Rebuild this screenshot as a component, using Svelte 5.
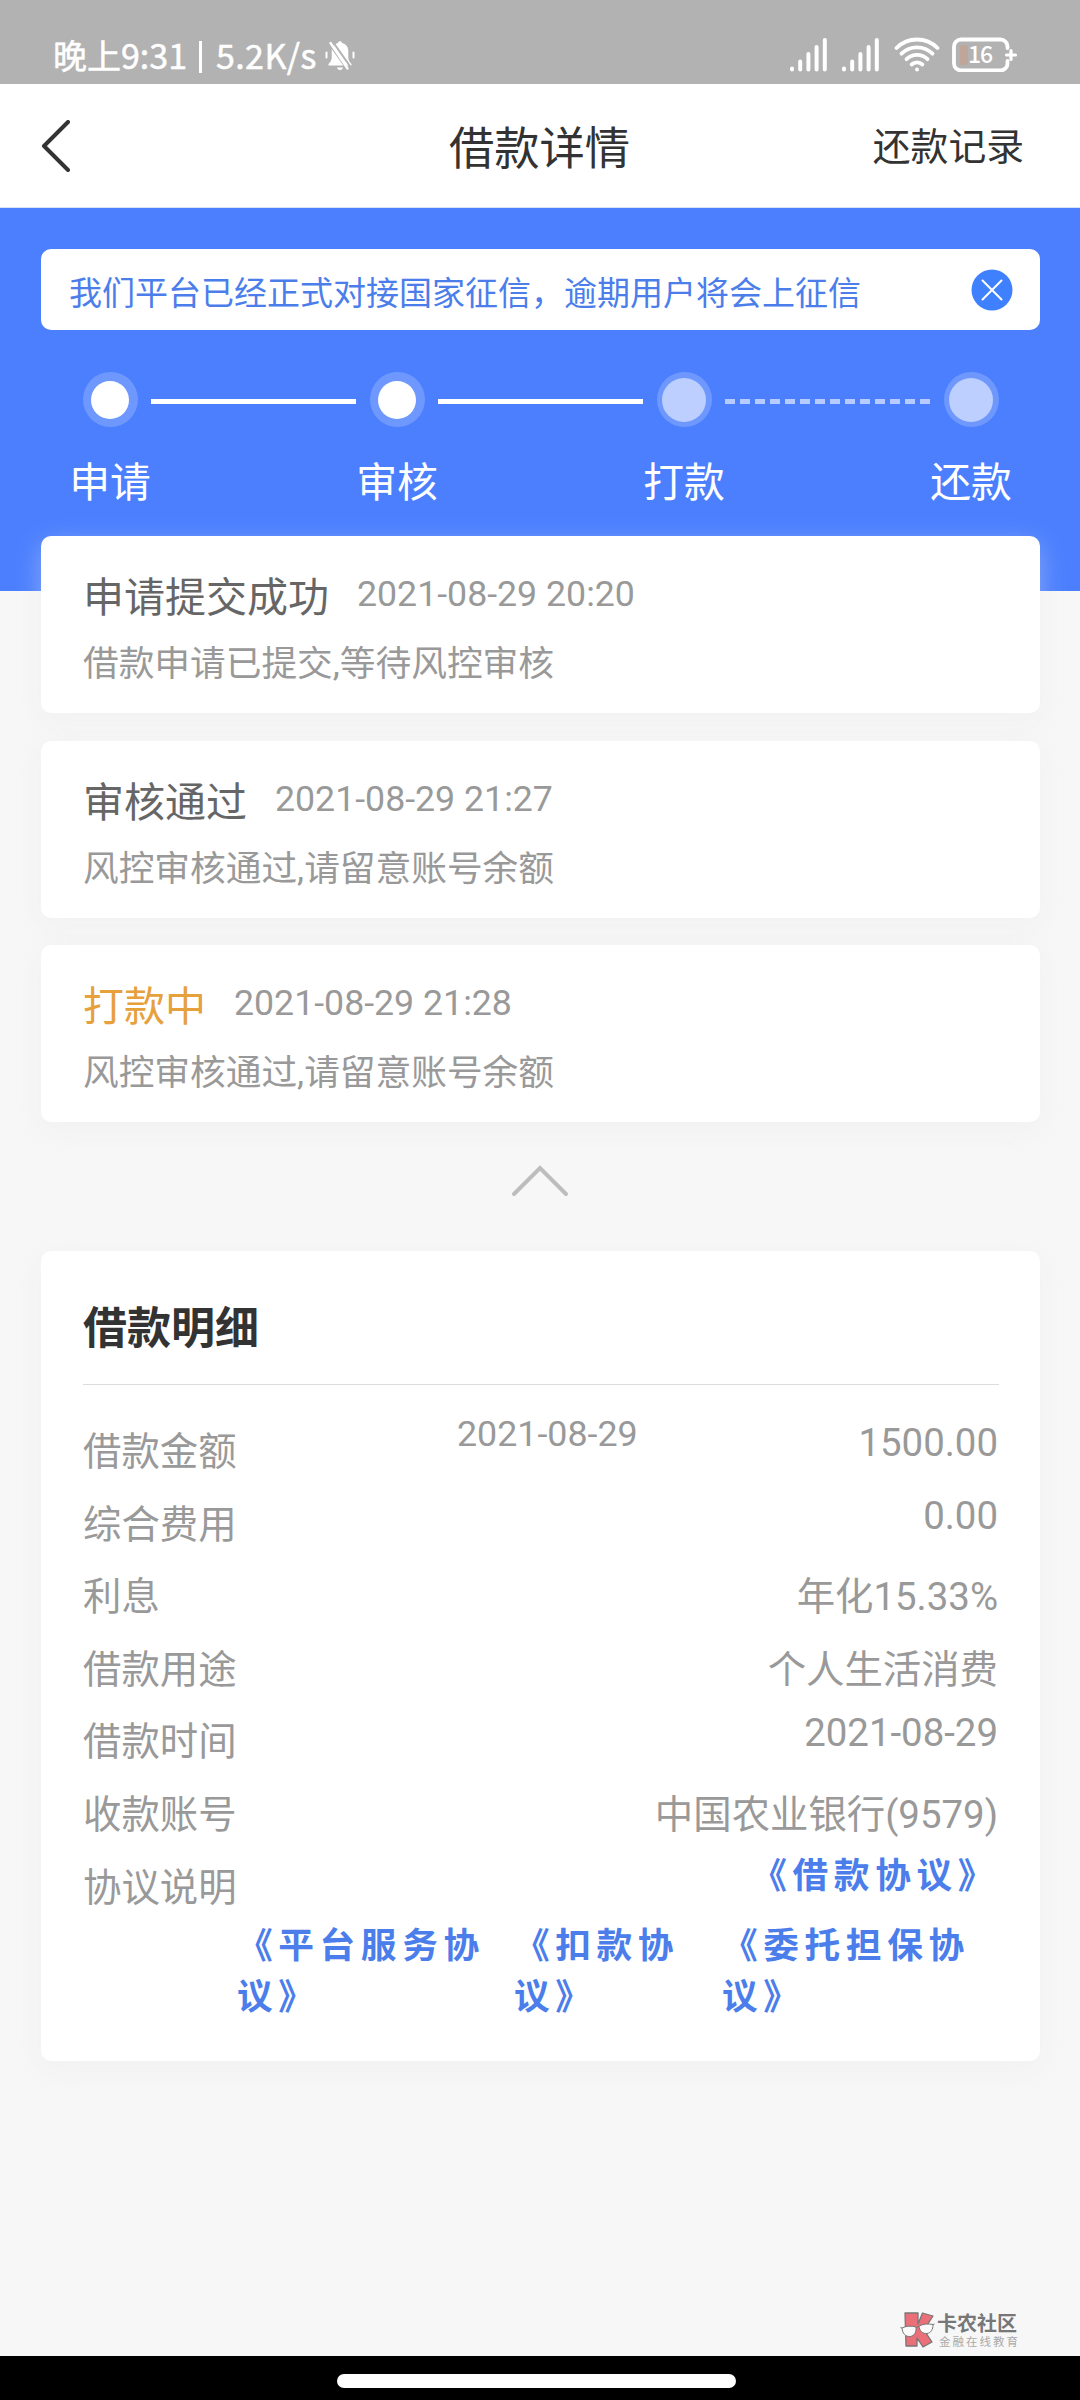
<script lang="ts">
  type Step = { label: string; done: boolean };
  type Progress = { title: string; time: string; text: string; active?: boolean };
  type Row = { label: string; value: string; numeric?: boolean; middle?: string };

  const steps: Step[] = [
    { label: '申请', done: true },
    { label: '审核', done: true },
    { label: '打款', done: false },
    { label: '还款', done: false }
  ];

  const progress: Progress[] = [
    { title: '申请提交成功', time: '2021-08-29 20:20', text: '借款申请已提交,等待风控审核' },
    { title: '审核通过', time: '2021-08-29 21:27', text: '风控审核通过,请留意账号余额' },
    { title: '打款中', time: '2021-08-29 21:28', text: '风控审核通过,请留意账号余额', active: true }
  ];

  const rows: Row[] = [
    { label: '借款金额', value: '1500.00', numeric: true, middle: '2021-08-29' },
    { label: '综合费用', value: '0.00', numeric: true },
    { label: '利息', value: '年化15.33%' },
    { label: '借款用途', value: '个人生活消费' },
    { label: '借款时间', value: '2021-08-29', numeric: true },
    { label: '收款账号', value: '中国农业银行(9579)' }
  ];

  const agreements = ['《平台服务协议》', '《扣款协议》', '《委托担保协议》'];

  let showNotice = $state(true);
</script>

<div class="page">
  <div class="status">
    <div class="status-left">
      <span class="clock">晚上9:31</span>
      <span class="divider"></span>
      <span class="speed">5.2K/s</span>
      <svg class="bell" width="30" height="31" viewBox="0 0 30 31">
        <path d="M15 1.2c1 0 1.800.7 2 1.700 4 .9 6.300 4 6.300 8.200v6.300c0 2.400 1.200 4.500 3.200 6.700v1.400H3.500v-1.400c2-2.200 3.200-4.300 3.200-6.700v-6.300c0-4.200 2.300-7.300 6.300-8.200.2-1 1-1.700 2-1.700z" fill="#fff" />
        <path d="M12 27.500h6c-.4 1.700-1.500 2.500-3 2.500s-2.600-.8-3-2.500z" fill="#fff" />
        <path d="M1.500 12.500v5M28.500 12.500v5" stroke="#fff" stroke-width="2" stroke-linecap="round" />
        <path d="M3 2l21 30M8 2l19 27" stroke="#b2b2b2" stroke-width="2" />
        <path d="M5.500 3l17 25.500" stroke="#fff" stroke-width="2.400" stroke-linecap="round" />
      </svg>
    </div>
    <div class="status-right">
      {#each [0, 1] as sim (sim)}
        <svg class="signal" width="37" height="36" viewBox="0 0 37 36">
          <path d="M2 32.500v1M10.200 25.500v8M18.400 18v15.500M26.600 11v22.500M34.800 4v29.500" stroke="#fff" stroke-width="4" stroke-linecap="round" />
        </svg>
      {/each}
      <svg class="wifi" width="46" height="36" viewBox="0 0 46 36">
        <g fill="none" stroke="#fff" stroke-width="3.800" stroke-linecap="round">
          <path d="M2.500 12a29 29 0 0 1 41 0" />
          <path d="M7.500 17.700a22 22 0 0 1 31 0" />
          <path d="M12.500 23.200a15 15 0 0 1 21 0" />
          <path d="M17.600 28.500a8 8 0 0 1 10.800 0" />
        </g>
        <circle cx="23" cy="33.500" r="2" fill="#fff" />
      </svg>
      <svg class="battery" width="66" height="36" viewBox="0 0 66 36">
        <rect x="8" y="9" width="8" height="20" rx="2" fill="#bfa699" />
        <path d="M55.500 12v-1.500a7 7 0 0 0-7-7H9a7 7 0 0 0-7 7v17a7 7 0 0 0 7 7h39.500a7 7 0 0 0 7-7V25" fill="none" stroke="#fff" stroke-width="3.800" stroke-linecap="round" />
        <path d="M54.500 19h9M59 14.500v9" stroke="#fff" stroke-width="3.200" stroke-linecap="round" />
        <text x="28" y="27" text-anchor="middle">16</text>
      </svg>
    </div>
  </div>

  <nav>
    <button class="back" aria-label="返回">
      <svg width="30" height="52" viewBox="0 0 30 52">
        <path d="M27 2L3 26l24 24" fill="none" stroke="#333" stroke-width="4" stroke-linecap="round" stroke-linejoin="round" />
      </svg>
    </button>
    <h1>借款详情</h1>
    <span class="records">还款记录</span>
  </nav>

  <div class="banner">
    {#if showNotice}
      <div class="notice">
        <span>我们平台已经正式对接国家征信，逾期用户将会上征信</span>
        <button aria-label="关闭" onclick={() => (showNotice = false)}>
          <svg width="42" height="42" viewBox="0 0 42 42">
            <circle cx="21" cy="21" r="20.500" fill="#3f80ff" />
            <path d="M11.500 11.500l19 19M30.500 11.500l-19 19" stroke="#fff" stroke-width="2" stroke-linecap="round" />
          </svg>
        </button>
      </div>
    {/if}

    <div class="steps">
      {#each steps as step, i}
        {#if i > 0}
          <div class="line" class:dashed={!steps[i - 1].done}></div>
        {/if}
        <div class="step">
          <div class="halo"><div class="dot" class:done={step.done}></div></div>
          <span>{step.label}</span>
        </div>
      {/each}
    </div>
  </div>

  <div class="progress">
    {#each progress as item}
      <div class="card item">
        <div class="item-head">
          <span class="item-title" class:active={item.active}>{item.title}</span>
          <span class="item-time">{item.time}</span>
        </div>
        <p>{item.text}</p>
      </div>
    {/each}
  </div>

  <div class="collapse">
    <svg width="58" height="34" viewBox="0 0 58 34">
      <path d="M3 30L29 4l26 26" fill="none" stroke="#bdbdbd" stroke-width="4" stroke-linecap="round" />
    </svg>
  </div>

  <div class="card detail">
    <h2>借款明细</h2>
    <div class="rows">
      {#each rows as row}
        <div class="row">
          <span class="label">{row.label}</span>
          {#if row.middle}
            <span class="middle">{row.middle}</span>
          {/if}
          <span class="value" class:numeric={row.numeric}>{row.value}</span>
        </div>
      {/each}
      <div class="row">
        <span class="label">协议说明</span>
        <span class="value link first">《借款协议》</span>
      </div>
    </div>
    <div class="agreements">
      {#each agreements as name}
        <span class="link">{name}</span>
      {/each}
    </div>
  </div>

  <footer>
    <svg width="35" height="38" viewBox="0 0 35 38">
      <path d="M5 2h13v11l4.500-11 10.500 3-9 14 8 12-9 5-6-9v8H6z" fill="#ea6f78" stroke="#777" stroke-width="1.300" stroke-linejoin="round" />
      <g fill="#fafafa" stroke="#777" stroke-width="1">
        <path d="M2 17c4-2 9-2.500 14-1 .5 5-1.500 9-6 9.500-4.500.3-7.500-3-8-8.500z" />
        <path d="M19 15c4-2 9-2.500 14-1.500 0 5-2 8.500-6 9-4.500.3-7.500-2.500-8-7.500z" />
        <path d="M16 16.500l3-1M0.500 16.500L2 17M33 13.500l1.500-.5" />
      </g>
    </svg>
    <div class="brand">
      <strong>卡农社区</strong>
      <small>金融在线教育</small>
    </div>
  </footer>

  <div class="gesture"><div class="pill"></div></div>
</div>

<style>
  :global(body) {
    margin: 0;
    background: #f7f7f7;
  }

  .page {
    display: flex;
    flex-direction: column;
    width: 1080px;
    height: 2400px;
    overflow: hidden;
    background: #f7f7f7;
    font-family: Roboto, 'Noto Sans CJK SC', sans-serif;
    color: #333;
  }

  h1,
  h2,
  p {
    margin: 0;
    font-weight: 400;
  }

  button {
    display: flex;
    padding: 0;
    border: 0;
    background: none;
  }

  svg {
    display: block;
    flex: none;
  }

  .status {
    display: flex;
    justify-content: space-between;
    box-sizing: border-box;
    height: 84px;
    padding: 36px 62px 0 53px;
    background: #b2b2b2;
    color: #fff;
  }

  .status-left,
  .status-right {
    display: flex;
  }

  .status-left {
    font-family: 'Noto Sans CJK SC', sans-serif;
    font-size: 34px;
    line-height: 38px;
    white-space: nowrap;
    -webkit-text-stroke: 0.5px #fff;
  }

  .clock {
    width: 133px;
  }

  .divider {
    width: 3px;
    height: 32px;
    margin: 5px 14px 0 13px;
    background: #fff;
  }

  .speed {
    width: 101px;
    letter-spacing: 0.4px;
  }

  .bell {
    margin: 4px 0 0 8px;
  }

  .signal {
    margin-right: 15px;
  }

  .wifi {
    margin-right: 12px;
  }

  .battery text {
    font-family: 'Noto Sans CJK SC', sans-serif;
    font-size: 23px;
    font-weight: 500;
    letter-spacing: -1px;
    fill: #fff;
  }

  nav {
    display: grid;
    grid-template-columns: 1fr auto 1fr;
    align-items: center;
    box-sizing: border-box;
    height: 124px;
    padding: 4px 56px 0 41px;
    border-bottom: 1px solid #d5e0fa;
    background: #fff;
  }

  .back {
    margin-top: -4px;
  }

  h1 {
    padding-left: 14px;
    padding-top: 4px;
    font-size: 45.3px;
    line-height: 60px;
  }

  .records {
    justify-self: end;
    margin-top: -2px;
    font-size: 37.8px;
    line-height: 60px;
  }

  .banner {
    box-sizing: border-box;
    height: 383px;
    padding-top: 41px;
    background: #4b7ffe;
  }

  .notice {
    display: flex;
    align-items: center;
    justify-content: space-between;
    box-sizing: border-box;
    height: 81px;
    margin: 0 40px 0 41px;
    padding: 0 27px 0 28px;
    border-radius: 10px;
    background: #fff;
    color: #4b7eea;
    font-size: 33px;
  }

  .notice span {
    padding-top: 2px;
  }

  .steps {
    display: flex;
    margin-top: 42px;
    padding-left: 69px;
  }

  .step {
    display: flex;
    flex-direction: column;
    align-items: center;
    width: 82px;
    color: #fff;
    font-size: 40.8px;
    line-height: 54px;
  }

  .step span {
    margin-top: 29px;
  }

  .halo {
    display: flex;
    align-items: center;
    justify-content: center;
    width: 55px;
    height: 55px;
    border-radius: 50%;
    background: rgba(255, 255, 255, 0.2);
  }

  .dot {
    width: 44px;
    height: 44px;
    border-radius: 50%;
    background: #bccfff;
  }

  .dot.done {
    width: 38px;
    height: 38px;
    background: #fff;
  }

  .line {
    width: 205px;
    height: 5px;
    margin-top: 27px;
    background: #fff;
  }

  .line.dashed {
    background: repeating-linear-gradient(90deg, #b7cbff 0 10px, transparent 10px 15px);
  }

  .card {
    margin: 0 40px 0 41px;
    border-radius: 10px;
    background: #fff;
    box-shadow: 0 8px 27px rgba(232, 232, 232, 0.4);
  }

  .progress {
    display: flex;
    flex-direction: column;
    gap: 27.5px;
    margin-top: -55px;
  }

  .item {
    box-sizing: border-box;
    height: 177px;
    padding: 32px 42px 0;
  }

  .item-head {
    display: flex;
    gap: 28px;
  }

  .item-title {
    color: #666;
    font-size: 41px;
    line-height: 60px;
  }

  .item-title.active {
    color: #e6a03c;
  }

  .item-time {
    color: #999;
    font-size: 35.7px;
    line-height: 52px;
  }

  .item p {
    margin-top: 9px;
    color: #999;
    font-size: 35.7px;
    line-height: 54px;
  }

  .collapse {
    display: flex;
    justify-content: center;
    height: 87px;
    padding-top: 42px;
  }

  .detail {
    box-sizing: border-box;
    height: 810px;
    padding: 0 41px 0 42px;
  }

  .detail h2 {
    box-sizing: border-box;
    height: 134px;
    padding-top: 48px;
    border-bottom: 1px solid #ddd;
    font-size: 44px;
    font-weight: 700;
    line-height: 60px;
  }

  .rows {
    padding-top: 31px;
  }

  .row {
    display: grid;
    grid-template-columns: 374px auto 1fr;
    height: 72.6px;
    color: #999;
    font-size: 38.4px;
    line-height: 72px;
  }

  .label {
    grid-column: 1;
  }

  .middle {
    grid-column: 2;
    margin-top: -18px;
    font-size: 35.8px;
  }

  .value {
    grid-column: 3;
    justify-self: end;
    padding-right: 1px;
  }

  .numeric {
    margin-top: -9px;
  }

  .link {
    color: #4b7eea;
    font-size: 35.7px;
    font-weight: 700;
    letter-spacing: 5.6px;
    line-height: 51px;
  }

  .first {
    margin-top: -1px;
    padding-right: 0;
  }

  .agreements {
    display: grid;
    grid-template-columns: 277px 208px 277px;
    justify-content: end;
    margin-top: -3px;
  }

  footer {
    display: flex;
    gap: 2px;
    height: 47px;
    margin-top: auto;
    padding-left: 900px;
  }

  footer svg {
    margin-top: 2px;
  }

  .brand {
    display: flex;
    flex-direction: column;
    white-space: nowrap;
  }

  .brand strong {
    color: #777;
    font-size: 20px;
    line-height: 30px;
  }

  .brand small {
    padding-left: 2px;
    color: #aaa;
    font-size: 11.5px;
    letter-spacing: 2px;
    line-height: 7px;
  }

  .gesture {
    height: 26px;
    padding-top: 18px;
    background: #000;
  }

  .pill {
    width: 399px;
    height: 14px;
    margin-left: 337px;
    border-radius: 7px;
    background: #fff;
  }
</style>
